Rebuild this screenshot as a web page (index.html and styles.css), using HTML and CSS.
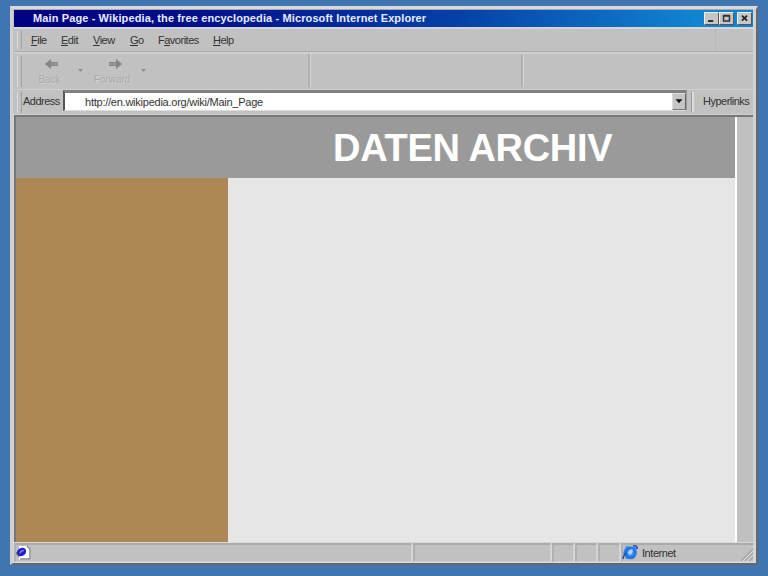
FILE: index.html
```
<!DOCTYPE html>
<html lang="de">
<head>
<meta charset="utf-8">
<title>Daten Archiv</title>
<link rel="stylesheet" href="styles.css">
</head>
<body>
<div class="window">
  <header class="titlebar">
    <span class="title">Main Page - Wikipedia, the free encyclopedia - Microsoft Internet Explorer</span>
    <div class="controls">
      <svg class="ctl" viewBox="0 0 14 13"><path d="M3 9.5h6" stroke="#222" stroke-width="2.2"/></svg>
      <svg class="ctl" viewBox="0 0 14 13"><path d="M3.5 3.5h7v6h-7zM3 3h8" fill="none" stroke="#333" stroke-width="1.8"/></svg>
      <svg class="ctl close" viewBox="0 0 14 13"><path d="M4 3l6 6M10 3l-6 6" stroke="#222" stroke-width="2"/></svg>
    </div>
  </header>
  <nav class="menubar">
    <span class="m-file"><u>F</u>ile</span><span class="m-edit"><u>E</u>dit</span><span class="m-view"><u>V</u>iew</span><span class="m-go"><u>G</u>o</span><span class="m-fav">F<u>a</u>vorites</span><span class="m-help"><u>H</u>elp</span>
    <i class="throbber"></i>
  </nav>
  <div class="toolbar">
    <div class="group nav">
      <div class="tool back"><svg viewBox="0 0 14 12"><path d="M0 6l6-5v3h7v4H6v3z" fill="#858585"/><path d="M6 6h7" stroke="#aaa"/></svg><span>Back</span></div>
      <i class="drop"></i>
      <div class="tool forward"><svg viewBox="0 0 14 12"><path d="M14 6L8 1v3H1v4h7v3z" fill="#858585"/><path d="M1 6h7" stroke="#aaa"/></svg><span>Forward</span></div>
      <i class="drop"></i>
    </div>
    <div class="group mid"></div>
    <div class="group rest"></div>
  </div>
  <div class="addressbar">
    <span class="label">Address</span>
    <div class="field"><span class="url">http://en.wikipedia.org/wiki/Main_Page</span><svg class="combo" viewBox="0 0 14 17"><path d="M3 6h8L7 10.5z" fill="#111"/></svg></div>
    <span class="links">Hyperlinks</span>
  </div>
  <main class="viewport">
    <div class="page">
      <div class="banner"><h1>DATEN ARCHIV</h1></div>
      <div class="columns"><aside></aside><section></section></div>
    </div>
    <div class="scroll"></div>
  </main>
  <footer class="statusbar">
    <div class="cell"><svg class="doc" viewBox="0 0 17 16"><path d="M4 1h9l3 3v11H4z" fill="#fff"/><path d="M12 1l3 3v10H5" fill="none" stroke="#888" stroke-width="1.5"/><ellipse cx="6.5" cy="7" rx="5" ry="4" fill="#2420cc" transform="rotate(-35 6.5 7)"/><path d="M4.8 8.2q2-3.6 4-2.2" fill="none" stroke="#8792ed" stroke-width="1.2"/><path d="M1.5 7q0 4 3 5" fill="none" stroke="#74743d"/></svg></div>
    <div class="cell"></div><div class="cell"></div><div class="cell"></div><div class="cell"></div>
    <div class="cell zone">
      <svg class="globe" viewBox="0 0 17 16"><path d="M4 1l11 1-2 10-9 2-3-6z" fill="#3f91e9"/><circle cx="8.5" cy="8" r="4.8" fill="none" stroke="#2575e8" stroke-width="3"/><path d="M5.5 8q2-4 5-4 1 3-2 6" fill="#9bdcff"/><path d="M1 14q1-6 4-6M11 1q5-1 4 3" fill="none" stroke="#3448a0" stroke-width="1.5"/></svg>
      <span>Internet</span>
      <svg class="grip" viewBox="0 0 13 13"><path d="M1 13L13 1M5 13l8-8M9 13l4-4" stroke="#a5a5a5" stroke-width="1.3"/><path d="M3 13L13 3M7 13l6-6" stroke="#e0e0e0"/></svg>
    </div>
  </footer>
</div>
</body>
</html>
```
FILE: styles.css
```
* { box-sizing: border-box; }
body {
  margin: 0;
  height: 576px;
  padding: 6px 10px 10px;
  overflow: hidden;
  background: #4175b2;
  font: 11px/14px "Liberation Sans", Arial, sans-serif;
  color: #333;
}
.window {
  width: 748px;
  height: 559px;
  display: flex;
  flex-direction: column;
  background: #c1c1c1;
  border: solid;
  border-width: 3px 2px 2px 3px;
  border-color: #d9d9d9 #686868 #686868 #d0d0d0;
  box-shadow: inset -3px 0 #d2d2d2;
}
span { white-space: nowrap; }
svg { display: block; flex: none; }
.titlebar {
  height: 18px;
  flex: none;
  margin: 0 3px 0 1px;
  border-top: 1px solid #aaa;
  display: flex;
  align-items: center;
  padding: 0 1px 1px 19px;
  background: linear-gradient(90deg, #000080 0, #00108c 25%, #0540a7 60%, #1084d0 92%);
  color: #e9edff;
  font-weight: bold;
}
.title { letter-spacing: 0.12px; }
.controls { display: flex; margin: 1px 0 0 auto; }
.ctl {
  width: 15px;
  height: 13px;
  background: #c6c6c6;
  border: 1px solid;
  border-color: #eee #555 #555 #eee;
}
.close { margin-left: 3px; }
.menubar {
  height: 25px;
  flex: none;
  display: flex;
  align-items: center;
  margin: 0 3px 0 1px;
  padding-left: 17px;
  border-top: 2px solid #d5d5d5;
  border-bottom: 1px solid #adadad;
  letter-spacing: -0.5px;
  position: relative;
}
.menubar::before, .toolbar::before, .addressbar::before {
  content: "";
  position: absolute;
  left: 3px;
  top: 2px;
  bottom: 2px;
  width: 3px;
  border-left: 1px solid #ddd;
  border-right: 1px solid #a0a0a0;
}
.m-file { width: 30px; }
.m-edit { width: 32px; }
.m-view { width: 37px; }
.m-go { width: 28px; }
.m-fav { width: 55px; }
.throbber {
  margin-left: auto;
  align-self: stretch;
  width: 38px;
  border-left: 1px solid #b8b8b8;
}
.toolbar {
  height: 38px;
  flex: none;
  display: flex;
  margin: 0 3px 0 1px;
  border-top: 2px solid #d0d0d0;
  border-bottom: 1px solid #d0d0d0;
  position: relative;
}
.group { margin-bottom: 2px; border-right: 1px solid #d7d7d7; box-shadow: inset -2px 0 #b0b0b0; }
.nav { width: 297px; display: flex; padding-left: 20px; }
.mid { width: 213px; }
.rest { flex: 1; border: 0; box-shadow: none; }
.tool {
  padding-top: 4px;
  display: flex;
  flex-direction: column;
  align-items: center;
  line-height: 12px;
  font-size: 10px;
  color: #aaa;
  text-shadow: 1px 1px #d2d2d2;
}
.tool span { padding-top: 4px; }
.tool svg { width: 14px; height: 12px; margin-left: 5px; }
.back { width: 31px; }
.forward { width: 44px; }
.drop {
  margin: 15px 7px 0 13px;
  width: 5px;
  height: 3px;
  background: #8d8d8d;
  clip-path: polygon(0 0, 100% 0, 50% 100%);
}
.drop:last-child { margin-left: 7px; }
.addressbar {
  height: 25px;
  flex: none;
  display: flex;
  margin: 0 3px 0 1px;
  padding: 0 0 1px 9px;
  position: relative;
  letter-spacing: -0.5px;
}
.label { width: 40px; padding-top: 4px; }
.field {
  width: 624px;
  height: 21px;
  background: #fff;
  border: solid;
  border-width: 3px 1px 1px 2px;
  border-color: #808080 #999 #ddd #555;
  display: flex;
  justify-content: space-between;
}
.url { padding: 2px 0 0 20px; letter-spacing: -0.24px; }
.combo {
  width: 14px;
  height: 17px;
  background: #c5c5c5;
  border: 1px solid;
  border-color: #ddd #666 #777 #ddd;
}
.links {
  flex: 1;
  margin: 2px 0 2px 4px;
  padding: 2px 0 0 11px;
  border-left: 1px solid #999;
  box-shadow: inset 2px 0 #ddd;
}
.viewport {
  height: 427px;
  flex: none;
  display: flex;
  margin: 0 3px 0 1px;
  border-top: 2px solid #777;
  border-left: 2px solid #777;
  outline: 1px solid #d0d0d0;
}
.page { width: 719px; display: flex; flex-direction: column; }
.banner { height: 61px; background: #9a9a9a; padding-left: 317px; flex: none; }
h1 {
  margin: 0;
  font-size: 38px;
  line-height: 62px;
  letter-spacing: -0.3px;
  color: #fff;
  white-space: nowrap;
}
.columns { display: flex; flex: 1; }
aside { width: 212px; background: #af8757; }
section { flex: 1; background: #e6e6e6; }
.scroll { flex: 1; background: #c0c0c0; border-left: 2px solid #fff; }
.statusbar {
  flex: 1;
  display: grid;
  grid-template-columns: 398px 138px 22px 22px 22px 1fr;
  gap: 1px;
  padding: 1px 2px 1px 1px;
  background: #d8d8d8;
  letter-spacing: -0.45px;
}
.cell {
  background: #c1c1c1;
  border: solid;
  border-width: 2px 1px 1px 2px;
  border-color: #aaa #d3d3d3 #d3d3d3 #b0b0b0;
  min-width: 0;
}
.doc { width: 17px; height: 16px; margin: 0 0 0 -1px; }
.zone { display: flex; align-items: center; gap: 3px; }
.globe { width: 17px; height: 16px; margin-left: -1px; }
.grip { width: 13px; height: 13px; margin-left: auto; align-self: flex-end; }
```
